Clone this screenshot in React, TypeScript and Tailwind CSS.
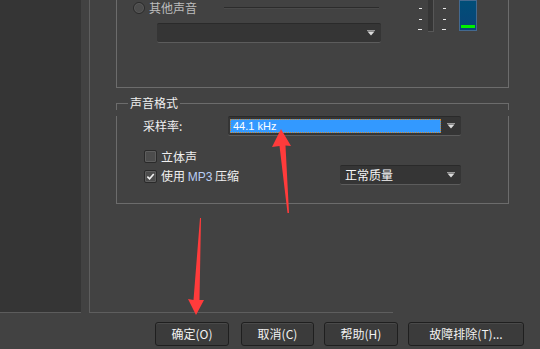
import React from "react";

const cjk = { fontFamily: '"Noto Sans CJK SC", "Liberation Sans", sans-serif' };
const latin = { fontFamily: '"Liberation Sans", "DejaVu Sans", sans-serif' };

function ComboArrow() {
  return (
    <svg viewBox="0 0 8 6" className="h-[6px] w-[8px]">
      <path d="M0 0.5h8" stroke="#9a9a9a" strokeWidth="1" />
      <path d="M0.5 1.5h7l-3.5 4z" fill="#dcdcdc" />
    </svg>
  );
}

function Combo({ children, className }: { children?: React.ReactNode; className: string }) {
  return (
    <div
      className={`flex h-[20px] items-center rounded-[2px] border-t border-b border-t-[#2a2a2a] border-b-[#5c5c5c] bg-[#353535] ${className}`}
    >
      <div className="flex h-full min-w-0 flex-1 items-center">{children}</div>
      <div className="flex w-[20px] items-center justify-center">
        <ComboArrow />
      </div>
    </div>
  );
}

function Checkbox({ checked }: { checked?: boolean }) {
  return (
    <div className="flex h-[13px] w-[13px] items-center justify-center rounded-[2px] border border-[#2a2a2a] bg-[#4c4c4c] shadow-[inset_0_0_0_1px_#5e5e5e]">
      {checked && (
        <svg viewBox="0 0 10 10" className="h-[9px] w-[9px]">
          <path d="M1.5 5.2 L4 7.6 L8.6 2.2" fill="none" stroke="#f2f2f2" strokeWidth="1.8" />
        </svg>
      )}
    </div>
  );
}

function Ticks() {
  return (
    <div className="flex w-[4px] flex-col items-end pt-[8px]">
      <div className="h-[1px] w-[3px] bg-[#e8e8e8]" />
      <div className="mt-[10px] h-[1px] w-[3px] bg-[#e8e8e8]" />
      <div className="mt-[9px] h-[1px] w-[4px] bg-[#e8e8e8]" />
    </div>
  );
}

function Button({ label, className }: { label: string; className: string }) {
  return (
    <div
      className={`flex h-[24px] items-center justify-center rounded-[3px] border border-[#1f1f1f] bg-[#3b3b3b] text-[12px] text-[#f2f2f2] shadow-[inset_0_1px_0_#4a4a4a] ${className}`}
      style={cjk}
    >
      {label}
    </div>
  );
}

export default function App() {
  return (
    <div className="relative h-[349px] w-[540px] overflow-hidden bg-[#424242]">
      <div className="flex h-[313px]">
        <div className="h-[313px] w-[81px] border-b border-[#5c5c5c] bg-[#353535]" />
        <div className="ml-[8px] flex h-[313px] flex-1 flex-col border-l border-[#5e5e5e] pl-[26px]">
          {/* upper group (cut off at top) */}
          <div className="flex h-[88px] w-[393px] border-r border-b border-l border-[#6c6c6c] pl-[16px]">
            <div className="flex w-[248px] flex-col">
              <div className="mt-[2px] flex h-[12px] items-center">
                <div className="h-[12px] w-[12px] rounded-full border border-[#2a2a2a] bg-[#4c4c4c] shadow-[inset_0_0_0_1px_#5a5a5a]" />
                <span className="ml-[4px] text-[12px] leading-none text-[#bdbdbd]" style={cjk}>
                  其他声音
                </span>
                <div className="ml-[27px] mr-[2px] h-[2px] flex-1 border-t border-b border-t-[#2c2c2c] border-b-[#4a4a4a]" />
              </div>
              <Combo className="ml-[24px] mt-[9px] w-[224px]" />
            </div>
            <div className="ml-[37px] flex h-[32px] items-start">
              <Ticks />
              <div className="ml-[6px] h-[32px] w-[6px] border-r border-b border-[#575757] bg-[#363636]" />
              <div className="ml-[8px]">
                <Ticks />
              </div>
              <div className="ml-[13px] flex h-[31px] w-[18px] items-end border border-[#44698f] bg-gradient-to-b from-[#004e78] to-[#0a4478] px-[1px] pb-[2px]">
                <div className="h-[3px] w-full bg-[#00f000]" />
              </div>
            </div>
          </div>

          {/* 声音格式 group */}
          <div className="mt-[8px] w-[393px]">
            <div className="flex h-[14px] items-center">
              <div className="h-[7px] w-[12px] self-end border-t border-l border-[#6c6c6c]" />
              <span className="px-[2px] text-[12px] leading-none text-[#f0f0f0]" style={cjk}>
                声音格式
              </span>
              <div className="h-[7px] flex-1 self-end border-t border-r border-[#6c6c6c]" />
            </div>
            <div className="border-r border-b border-l border-[#6c6c6c] pb-[18px]">
              <div className="mt-[6px] flex h-[20px] items-center">
                <span className="ml-[26px] w-[85px] text-[12px] leading-none text-[#f0f0f0]" style={cjk}>
                  采样率:
                </span>
                <Combo className="w-[233px]">
                  <div className="ml-[2px] flex h-[14px] w-[211px] items-center border border-dotted border-[#d08a30] bg-[#3399ff] pl-[2px] text-[11px] text-white" style={latin}>
                    44.1 kHz
                  </div>
                </Combo>
              </div>
              <div className="mt-[14px] ml-[27px] flex h-[13px] items-center">
                <Checkbox />
                <span className="ml-[4px] text-[12px] leading-none text-[#f0f0f0]" style={cjk}>
                  立体声
                </span>
              </div>
              <div className="mt-[2px] flex h-[20px] items-start">
                <div className="ml-[27px] mt-[5px] flex h-[13px] w-[196px] items-center">
                  <Checkbox checked />
                  <span className="ml-[4px] text-[12px] leading-none text-[#f0f0f0]" style={cjk}>
                    使用 <span className="text-[#b8cdf5]" style={latin}>MP3</span> 压缩
                  </span>
                </div>
                <Combo className="w-[121px]">
                  <span className="ml-[5px] text-[12px] leading-none text-[#f6f6f6]" style={cjk}>
                    正常质量
                  </span>
                </Combo>
              </div>
            </div>
          </div>
        </div>
      </div>
      {/* bottom line of outer frame only up to x≈393 */}
      <div className="-mt-px ml-[89px] h-[1px] w-[304px] bg-[#5e5e5e]" />

      <div className="mt-[9px] flex">
        <Button label="确定(O)" className="ml-[155px] w-[74px]" />
        <Button label="取消(C)" className="ml-[12px] w-[73px]" />
        <Button label="帮助(H)" className="ml-[10px] w-[74px]" />
        <Button label="故障排除(T)..." className="ml-[10px] w-[116px]" />
      </div>

      <svg className="pointer-events-none absolute left-0 top-0" width="540" height="349" viewBox="0 0 540 349">
        <polygon
          points="281,129 291,146 285.5,145.5 289,213 287.5,213 279.5,146 272,147"
          fill="#ff3b3b"
        />
        <polygon
          points="200,218 201,218 199.5,300 204,300 196,315 188,299 193.5,300"
          fill="#ff3b3b"
        />
      </svg>
    </div>
  );
}
